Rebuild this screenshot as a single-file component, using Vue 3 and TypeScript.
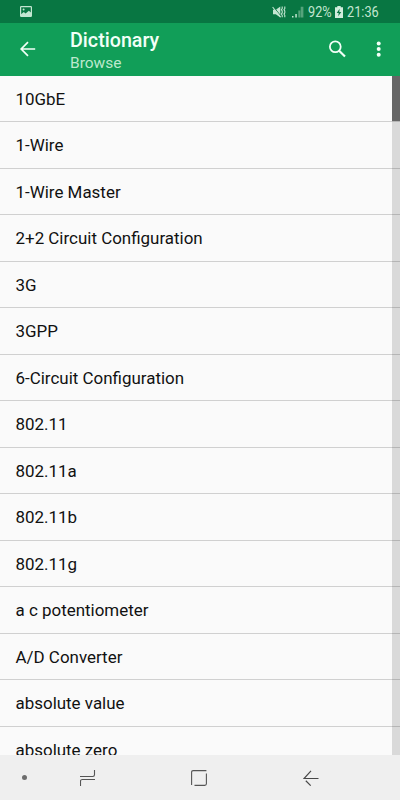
<script setup lang="ts">
const entries: string[] = [
  '10GbE',
  '1-Wire',
  '1-Wire Master',
  '2+2 Circuit Configuration',
  '3G',
  '3GPP',
  '6-Circuit Configuration',
  '802.11',
  '802.11a',
  '802.11b',
  '802.11g',
  'a c potentiometer',
  'A/D Converter',
  'absolute value',
  'absolute zero',
]
</script>

<template>
  <div class="screen">
    <header class="status">
      <svg class="picture" width="12" height="11" viewBox="0 0 12 11">
        <rect x="0.6" y="0.6" width="10.8" height="9.8" rx="0.6" fill="none" stroke="#c3e6d1" stroke-width="1.2" />
        <path d="M1 8.2 3.8 6l1.8 1.4L8.8 4.8 11 6.6V10H1z" fill="#c3e6d1" />
        <circle cx="3.6" cy="3.4" r="1" fill="#c3e6d1" />
      </svg>
      <div class="indicators">
        <svg class="mute" width="14" height="12" viewBox="0 0 14 12">
          <path d="M1 3.800h2.800L8.300.6v10.800L3.800 8.200H1z" fill="#c3e6d1" />
          <path d="M1.400.6 9.200 10.400" stroke="#087642" stroke-width="0.900" />
          <path d="M.6 1 8.600 11.200" stroke="#c3e6d1" stroke-width="1.100" />
          <path d="M10.200.5v2l-.8 1.200.8 1.200v2l-.8 1.200.8 1.200v2M12.800.5v2l-.8 1.200.8 1.200v2l-.8 1.200.8 1.200v2" fill="none" stroke="#c3e6d1" stroke-width="1.100" />
        </svg>
        <svg class="signal" width="12" height="12" viewBox="0 0 12 12">
          <path d="M0 10h1.500v1.500H0zM3.300 8h1.500v3.500H3.300z" fill="#c3e6d1" />
          <path d="M6.300 4.500h2v7h-2zM8.700.8h2.700v10.700H8.700z" fill="#55a37b" />
        </svg>
        <span class="percent"><span class="narrow">92%</span></span>
        <svg class="battery" width="8" height="12" viewBox="0 0 8 12">
          <path d="M2.300 0h3.400v1.300H8V12H0V1.300h2.300z" fill="#d2eddd" />
          <path d="M4.600 2.800 1.700 7h2l-.5 3.200L6.300 6h-2z" fill="#087642" />
        </svg>
        <span class="clock"><span class="narrow">21:36</span></span>
      </div>
    </header>

    <div class="toolbar">
      <svg class="back" width="16" height="16" viewBox="0 0 16 16">
        <path d="M15.200 8H1.500M8 1.200 1.200 8 8 14.800" fill="none" stroke="#f2fff7" stroke-width="1.700" />
      </svg>
      <div class="titles">
        <h1>Dictionary</h1>
        <p>Browse</p>
      </div>
      <svg class="search" width="18" height="18" viewBox="0 0 18 18">
        <circle cx="7.300" cy="6.800" r="5.400" fill="none" stroke="#f2fff7" stroke-width="1.800" />
        <path d="M11.100 10.700 17 16.500" stroke="#f2fff7" stroke-width="2.200" />
      </svg>
      <svg class="more" width="6" height="18" viewBox="0 0 6 18">
        <circle cx="2.700" cy="3.500" r="2" fill="#f2fff7" />
        <circle cx="2.700" cy="9.100" r="2" fill="#f2fff7" />
        <circle cx="2.700" cy="14.700" r="2" fill="#f2fff7" />
      </svg>
    </div>

    <main class="content">
      <ul class="list">
        <li v-for="entry in entries" :key="entry">{{ entry }}</li>
      </ul>
      <div class="track"><div class="thumb"></div></div>
    </main>

    <nav class="navbar">
      <span class="dot"></span>
      <svg class="recents" width="16" height="18" viewBox="0 0 16 18">
        <path d="M0 7.500h12.800q1.700 0 1.700-1.700V1M15 10.500H2.200Q.5 10.500.5 12.200V17" fill="none" stroke="#555" stroke-width="1.100" />
      </svg>
      <svg class="home" width="16" height="16" viewBox="0 0 16 16">
        <path d="M.6 15V2.200Q.6.600 2.200.600H15.400M15.400 3.500V13.800Q15.400 15.400 13.800 15.400H3.500" fill="none" stroke="#555" stroke-width="1.100" />
      </svg>
      <svg class="return" width="16" height="16" viewBox="0 0 16 16">
        <path d="M15.500 8.500H1L8 .8M2.800 10.800 7.700 15.600" fill="none" stroke="#484848" stroke-width="1.200" />
      </svg>
    </nav>
  </div>
</template>

<style>
body {
  margin: 0;
}
</style>

<style scoped>
.screen {
  width: 400px;
  height: 800px;
  display: flex;
  flex-direction: column;
  overflow: hidden;
  background: #fafafa;
  font-family: Roboto, "Liberation Sans", sans-serif;
}
.status {
  height: 23px;
  flex: none;
  box-sizing: border-box;
  display: flex;
  align-items: center;
  justify-content: space-between;
  padding: 0 21px 0 20px;
  background: #087642;
  color: #c3e6d1;
}
.indicators {
  display: flex;
  align-items: center;
  font-size: 14px;
  line-height: 24px;
}
.narrow {
  display: inline-block;
  transform: scaleX(0.91);
  transform-origin: left center;
}
.signal {
  margin-left: 6px;
}
.percent {
  width: 23px;
  margin-left: 4px;
  white-space: nowrap;
}
.battery {
  margin: 0 4px;
}
.clock {
  width: 32px;
  white-space: nowrap;
}
.toolbar {
  height: 53px;
  flex: none;
  box-sizing: border-box;
  display: flex;
  align-items: center;
  padding: 0 18px 1px 20px;
  background: #119e58;
}
.back {
  flex: none;
}
.titles {
  flex: 1;
  margin-left: 34px;
  padding-top: 3px;
}
.titles h1 {
  margin: 0;
  font-size: 19.700px;
  font-weight: 500;
  line-height: 24px;
  color: #f2fff7;
}
.titles p {
  margin: 0;
  font-size: 15.500px;
  line-height: 20px;
  color: #bde8ce;
}
.more {
  margin-left: 30px;
}
.content {
  flex: 1;
  min-height: 0;
  display: flex;
  overflow: hidden;
}
.list {
  flex: 1;
  margin: -0.500px -8px 0 0;
  padding: 0;
  list-style: none;
}
.list li {
  height: 46.500px;
  box-sizing: border-box;
  padding-left: 15.500px;
  border-bottom: 1px solid #d0d0d0;
  font-size: 16.950px;
  line-height: 47px;
  color: #111;
}
.track {
  position: relative;
  width: 8px;
  background: rgba(0, 0, 0, 0.13);
}
.thumb {
  height: 45px;
  background: #666;
}
.navbar {
  height: 45px;
  flex: none;
  display: flex;
  align-items: center;
  box-sizing: border-box;
  padding: 0 0 0 22px;
  background: #efefef;
}
.dot {
  width: 5px;
  height: 5px;
  border-radius: 50%;
  background: #6d6d6d;
}
.recents {
  margin-left: 53px;
}
.home {
  margin-left: 95px;
}
.return {
  margin-left: 96px;
}
</style>
